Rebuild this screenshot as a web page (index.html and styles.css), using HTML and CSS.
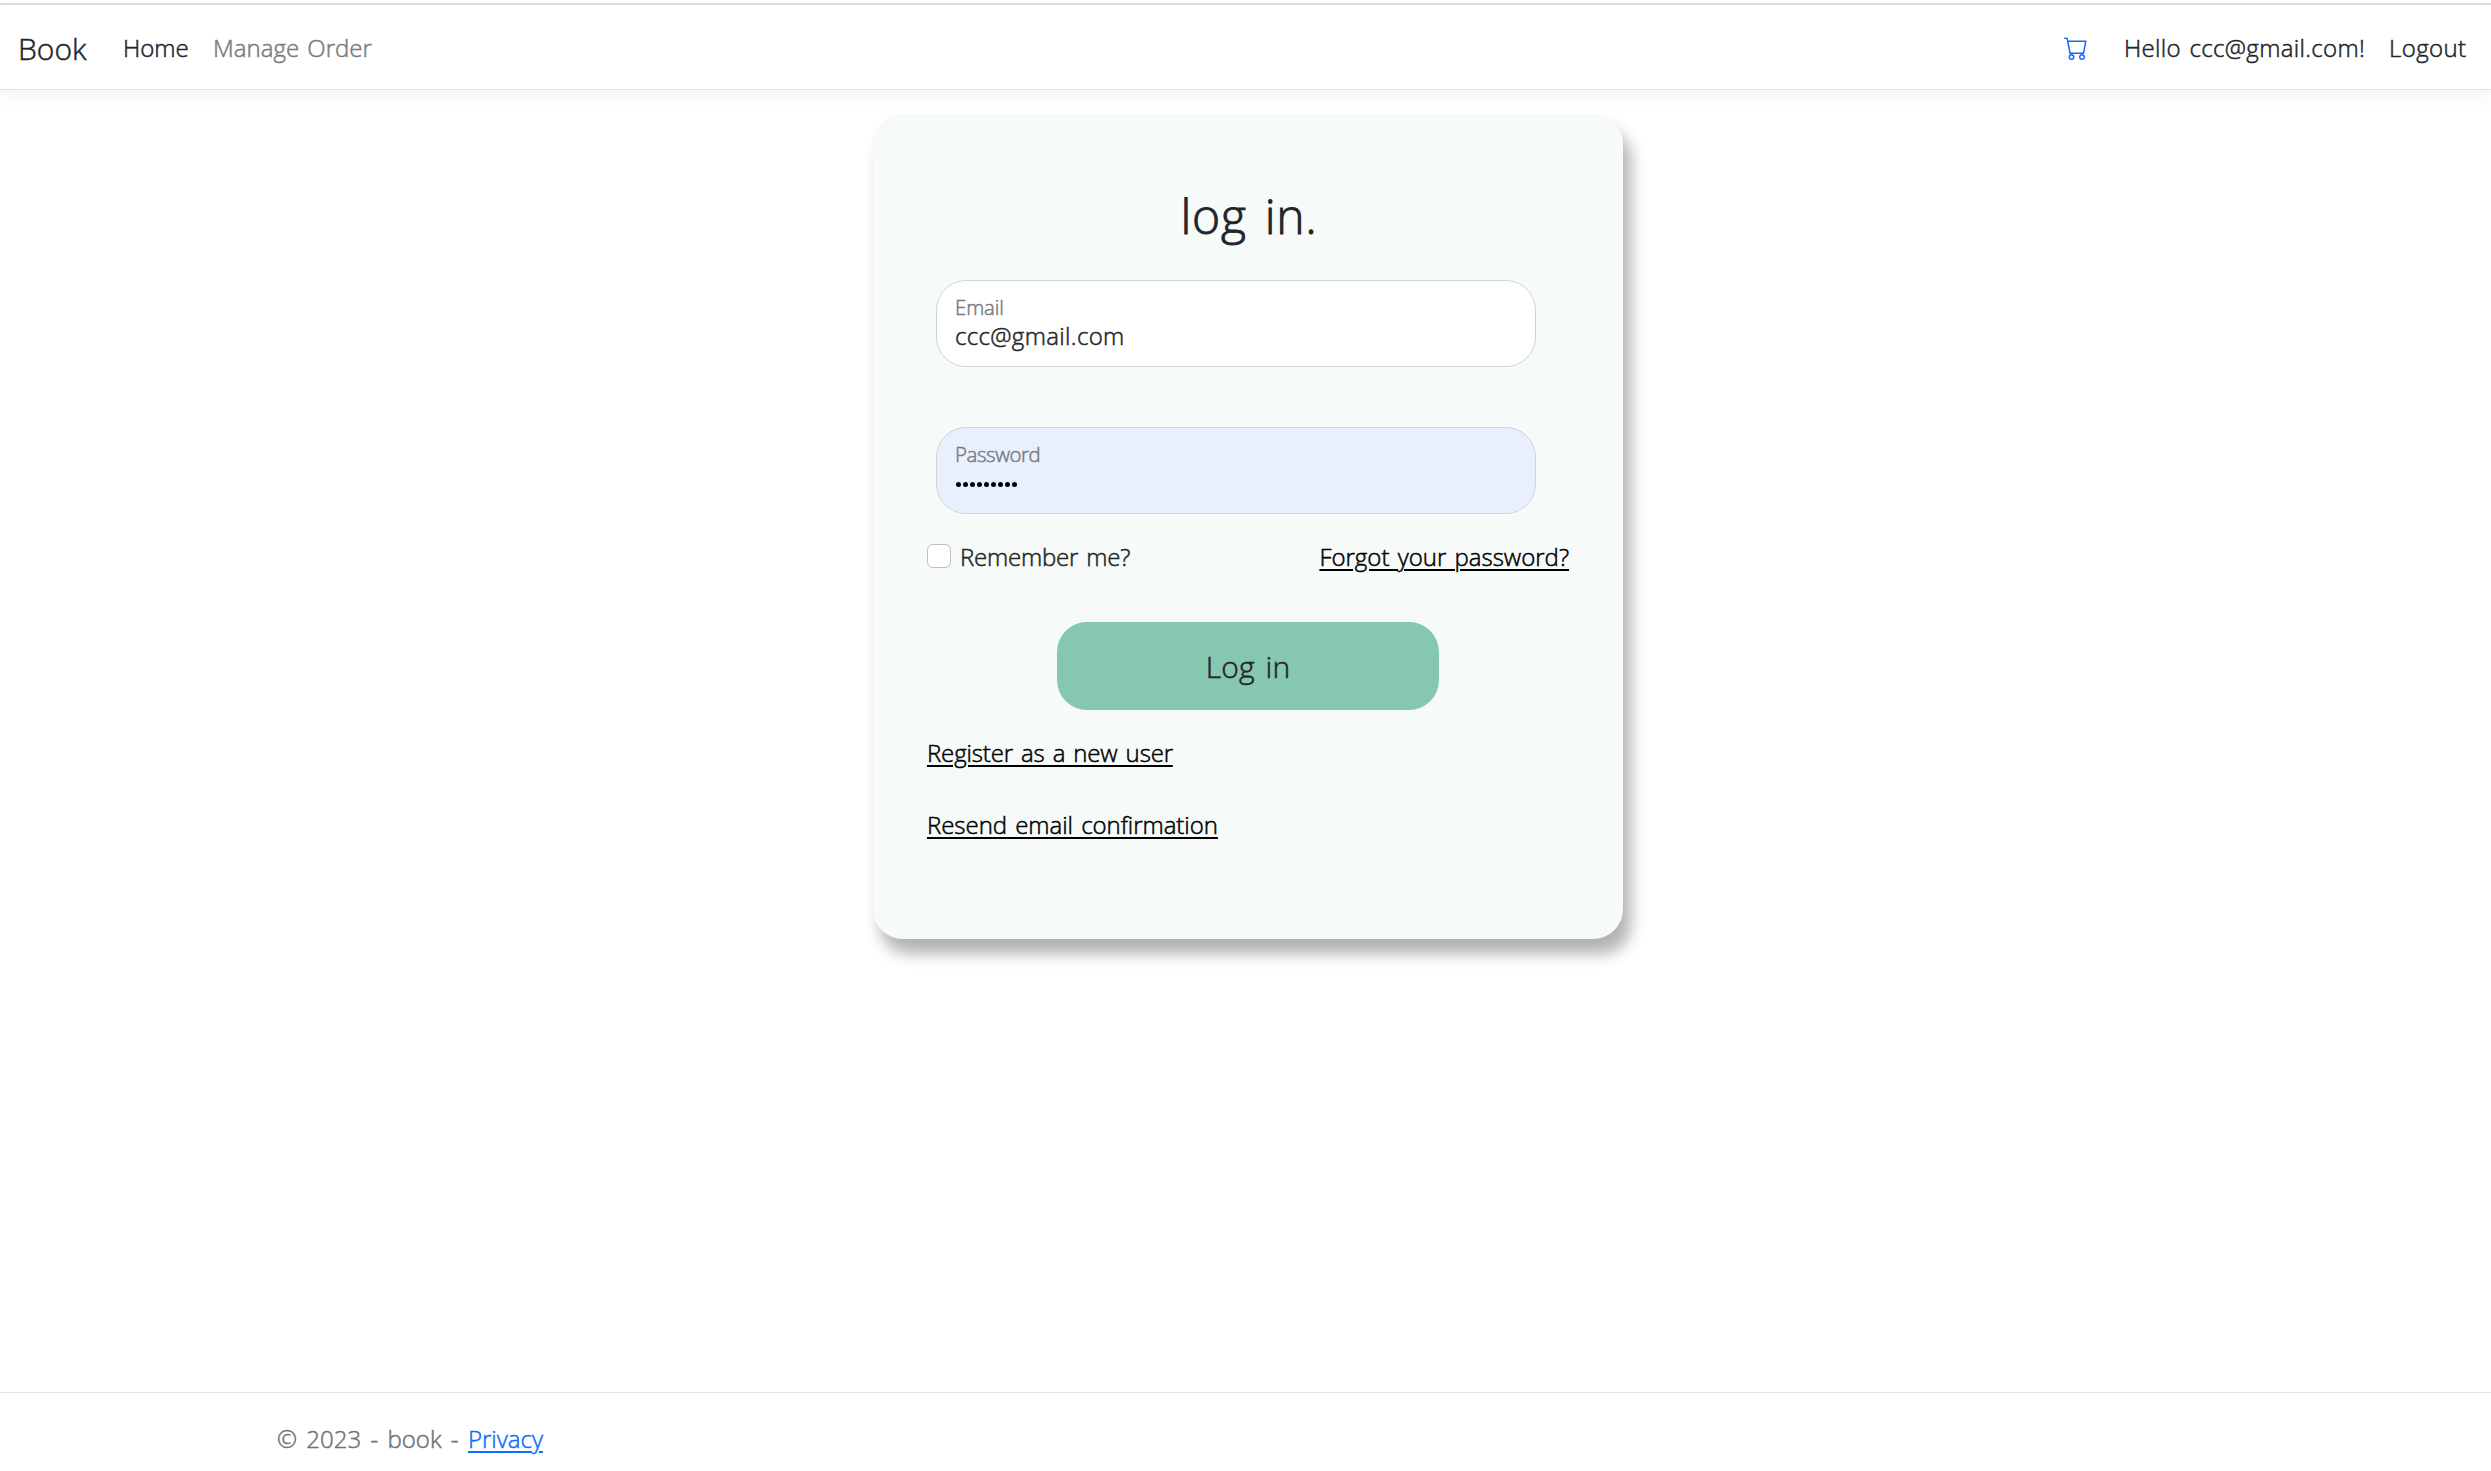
FILE: index.html
```html
<!DOCTYPE html>
<html lang="en">
<head>
<meta charset="utf-8">
<title>Log in - book</title>
<link rel="stylesheet" href="styles.css">
</head>
<body>
<header class="topbar">
  <nav class="navbar">
    <a class="brand">Book</a>
    <a class="nav-link home">Home</a>
    <a class="nav-link muted manage">Manage Order</a>
    <a class="cart" aria-label="Cart">
      <svg viewBox="0 0 16 16" width="24" height="24" fill="currentColor"><path d="M0 1.5A.5.5 0 0 1 .5 1H2a.5.5 0 0 1 .485.379L2.89 3H14.5a.5.5 0 0 1 .491.592l-1.5 8A.5.5 0 0 1 13 12H4a.5.5 0 0 1-.491-.408L2.01 3.607 1.61 2H.5a.5.5 0 0 1-.5-.5zM3.102 4l1.313 7h8.17l1.313-7H3.102zM5 12a2 2 0 1 0 0 4 2 2 0 0 0 0-4zm7 0a2 2 0 1 0 0 4 2 2 0 0 0 0-4zm-7 1a1 1 0 1 1 0 2 1 1 0 0 1 0-2zm7 0a1 1 0 1 1 0 2 1 1 0 0 1 0-2z"/></svg>
    </a>
    <a class="nav-link hello">Hello ccc@gmail.com!</a>
    <a class="nav-link logout">Logout</a>
  </nav>
</header>
<main class="main">
  <section class="card">
    <h1 class="title">log in.</h1>
    <div class="field">
      <span class="field-label">Email</span>
      <span class="field-value">ccc@gmail.com</span>
    </div>
    <div class="field autofilled">
      <span class="field-label password">Password</span>
      <span class="dots"><i></i><i></i><i></i><i></i><i></i><i></i><i></i><i></i><i></i></span>
    </div>
    <div class="options">
      <span class="checkbox"></span>
      <span class="remember">Remember me?</span>
      <a class="link forgot">Forgot your password?</a>
    </div>
    <button class="submit">Log in</button>
    <a class="link register">Register as a new user</a>
    <a class="link resend">Resend email confirmation</a>
  </section>
</main>
<footer class="footer"><span class="copy">© 2023 - book - </span><a class="privacy">Privacy</a></footer>
</body>
</html>
```
FILE: styles.css
```css
* { box-sizing: border-box; }
body {
  margin: 0;
  min-height: 1471px;
  display: flex;
  flex-direction: column;
  background: #fff;
  color: #212529;
  font: 300 24px/36px "Open Sans", "Noto Sans", sans-serif;
  word-spacing: 2px;
  -webkit-text-stroke: .5px currentColor;
}
.topbar {
  height: 87px;
  margin-top: 3px;
  border-top: 2px solid #dcdcdc;
  border-bottom: 1px solid #dee2e6;
  box-shadow: 0 6px 18px rgba(0, 0, 0, .05);
}
.navbar { display: flex; align-items: center; height: 84px; padding: 2px 24px 0 18px; white-space: nowrap; }
.brand { width: 105px; padding-top: 1px; font-size: 30px; }
.home { width: 90px; }
.manage { letter-spacing: .02px; }
.muted { color: #7a7c7e; }
.cart { display: flex; margin-left: auto; margin-right: 36px; color: #0d6efd; }
.hello { width: 265px; letter-spacing: .33px; }
.logout { width: 78px; letter-spacing: .4px; }
.main { flex: 1; display: flex; justify-content: center; align-items: flex-start; padding: 24px 0 0 5px; }
.card {
  width: 750px;
  height: 825px;
  padding: 66px 54px 0;
  display: flex;
  flex-direction: column;
  align-items: flex-start;
  background: #f6faf9;
  border-radius: 30px;
  box-shadow: 7.5px 15px 15px rgba(0, 0, 0, .3);
}
.title { align-self: center; margin: 0; padding-left: 2px; font-size: 48px; font-weight: 300; line-height: 72px; height: 100px; letter-spacing: .7px; word-spacing: 5px; -webkit-text-stroke-width: .9px; }
.field {
  display: flex;
  flex-direction: column;
  width: 600px;
  height: 87px;
  margin: 0 0 60px 9px;
  padding: 12px 18px 0;
  background: #fff;
  border: 1px solid #ced4da;
  border-radius: 30px;
}
.autofilled { background: #e8f0fe; margin-bottom: 27px; }
.field-label { font-size: 20.4px; line-height: 28px; letter-spacing: -.1px; color: #7a7c7f; }
.password { letter-spacing: -.4px; }
.field-value { line-height: 30px; letter-spacing: .35px; }
.dots { display: flex; gap: 2px; padding: 14px 0 0 1px; }
.dots i { width: 5px; height: 5px; border-radius: 50%; background: #000; }
.options { display: flex; width: 642px; height: 81px; line-height: 32px; }
.checkbox { width: 24px; height: 24px; margin: 3px 9px 0 0; background: #fff; border: 1px solid #bfbfbf; border-radius: 6px; }
.remember { letter-spacing: -.2px; }
.link { color: #000; text-decoration: underline; text-decoration-thickness: 2px; text-underline-offset: 3px; white-space: nowrap; }
.forgot { margin-left: auto; }
.submit { align-self: center; width: 382px; height: 88px; padding: 2px 0 0; border: 0; border-radius: 30px; background: #86c7af; color: #212529; font: inherit; font-size: 30px; letter-spacing: .15px; word-spacing: 3px; -webkit-text-stroke: inherit; }
.register { margin: 25px 0 36px; letter-spacing: -.15px; }
.resend { letter-spacing: -.04px; }
.footer { height: 79px; border-top: 1px solid #dee2e6; padding: 28px 0 0 277px; color: #6c757d; white-space: pre; }
.copy { word-spacing: 3.1px; }
.privacy { color: #0d6efd; text-decoration: underline; text-decoration-thickness: 2px; text-underline-offset: 3px; }
```
